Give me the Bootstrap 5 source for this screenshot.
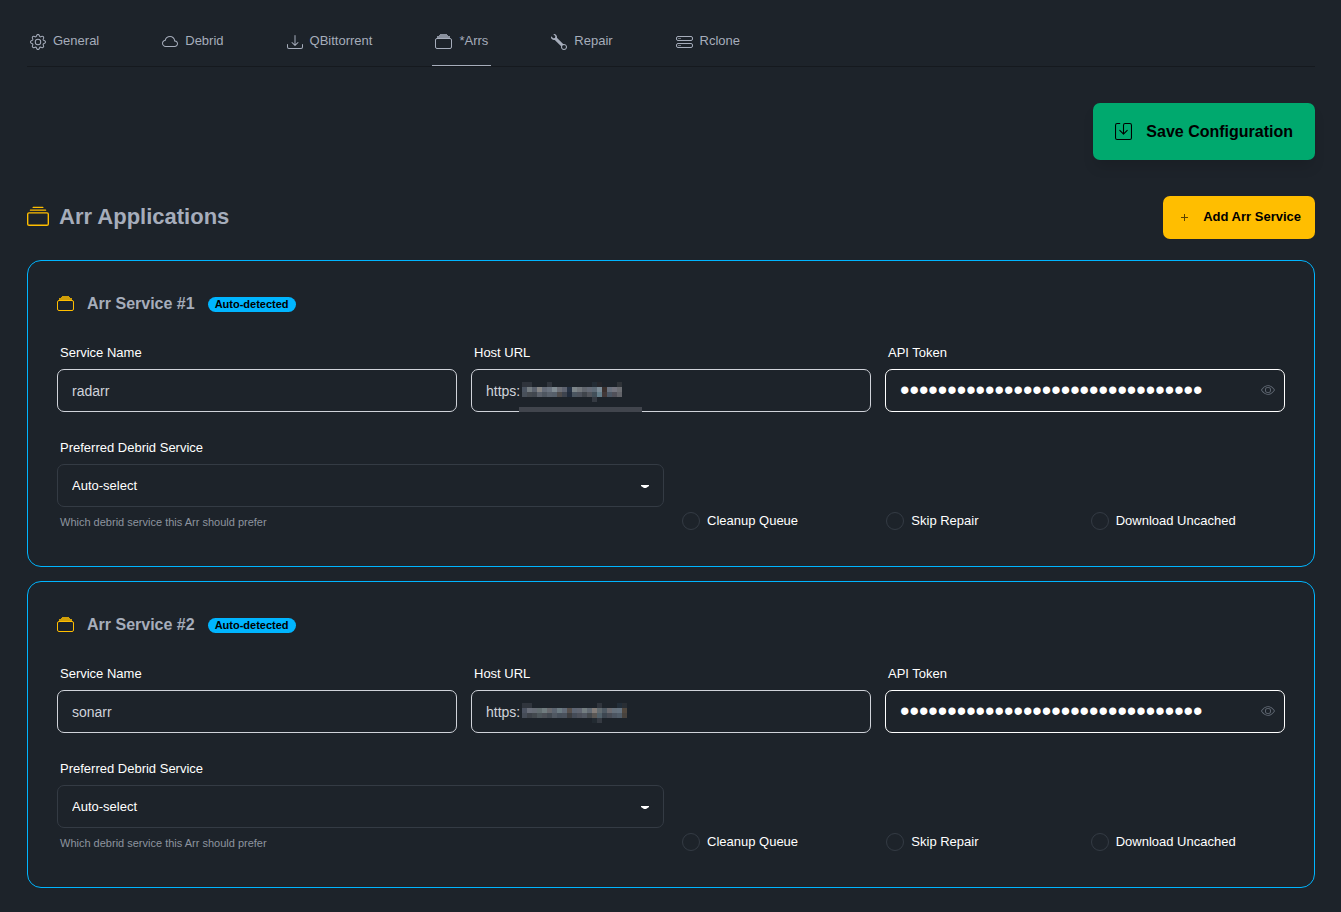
<!DOCTYPE html>
<html lang="en" data-bs-theme="dark">
<head>
<meta charset="utf-8">
<meta name="viewport" content="width=device-width, initial-scale=1">
<title>Arr Applications</title>
<link href="https://cdn.jsdelivr.net/npm/bootstrap@5.3.0/dist/css/bootstrap.min.css" rel="stylesheet">
<style>
body{background:#1d232a;color:#a6adbb;font-family:"Liberation Sans",Arial,sans-serif;font-size:13px;line-height:18px}
.page{padding:22px 26px 24px 27px}
svg{flex:none;display:block}
.tabs{gap:57px;border-bottom:1px solid #15191e;margin-bottom:36px}
.tabs .nav-link{padding:0 3px 6px;height:44px;gap:7px;color:#a6adbb;border-bottom:1px solid transparent;border-radius:0}
.tabs .nav-link svg{margin-top:2px}
.tabs .nav-link.active{border-bottom-color:#a6adbb}
.btn-save,.btn-save:hover{background:#00a96e;color:#000}
.btn-save{font-size:16px;font-weight:700;height:57px;padding:0 22px;gap:14px;border:0;border-radius:7px;box-shadow:0 9px 14px -3px #0002}
.btn-add,.btn-add:hover{background:#ffbe00;color:#000}
.btn-add{font-weight:700;font-size:13px;line-height:18px;height:43px;padding:0 14px 2px;gap:12px;border:0;border-radius:7px}
.title-row{margin:36px 0 21px}
h1{font-size:22px;line-height:30px;font-weight:700;margin:0;padding-bottom:2px;gap:10px}
h2{font-size:16px;line-height:26px;font-weight:700;margin:0}
h1,h2{color:#a6adbb}
.gold{color:#ffbe00}
.service{border:1px solid #00b5ff;border-radius:14px;padding:29px;margin-bottom:14px}
.service-head{gap:13px;margin-bottom:27px;padding-top:1px}
.detected{background:#00b5ff;color:#000;font-size:11px;font-weight:700;line-height:15px;padding:0 7px;border-radius:8px}
.fields{display:grid;grid-template-columns:repeat(3,1fr);gap:14px}
.options{display:grid;grid-template-columns:1fr 1fr;gap:14px;margin-top:27px}
.form-label{color:#fff;margin:0 0 7px;padding-left:3px;display:block}
.service .form-control,.service .form-select{background:transparent;border:1px solid #d0d3da;border-radius:7px;height:43px;padding:0 14px;font-size:14px;color:#d0d3da}
.service .token{border-color:#fff;color:#fff;padding-right:40px;font-size:27px}
.service .form-select{border-color:#343b44;color:#fff;font-size:13px;appearance:none}
.caret{right:15px;top:21px;pointer-events:none}
.eye{right:10px;top:14px;padding:0;border:0;background:none;color:#626a75}
.mosaic{left:48px;top:13px;pointer-events:none}
.hint{font-size:11px;line-height:15px;margin:8px 0 7px;padding-left:3px;color:#8d949f}
.checks{display:grid;grid-template-columns:repeat(3,1fr);gap:10px;align-items:end;padding:0 0 7px 4px}
.tick{gap:7px;color:#fff}
.tick .form-check-input{margin:0;width:18px;height:18px;border:1px solid #343b44;background-color:transparent;border-radius:50%}
</style>
</head>
<body>
<svg class="d-none" xmlns="http://www.w3.org/2000/svg">
<symbol id="gear" viewBox="0 0 16 16"><path d="M8 4.754a3.246 3.246 0 1 0 0 6.492 3.246 3.246 0 0 0 0-6.492zM5.754 8a2.246 2.246 0 1 1 4.492 0 2.246 2.246 0 0 1-4.492 0z"/><path d="M9.796 1.343c-.527-1.79-3.065-1.79-3.592 0l-.094.319a.873.873 0 0 1-1.255.52l-.292-.16c-1.64-.892-3.433.902-2.54 2.541l.159.292a.873.873 0 0 1-.52 1.255l-.319.094c-1.79.527-1.79 3.065 0 3.592l.319.094a.873.873 0 0 1 .52 1.255l-.16.292c-.892 1.64.901 3.434 2.541 2.54l.292-.159a.873.873 0 0 1 1.255.52l.094.319c.527 1.79 3.065 1.79 3.592 0l.094-.319a.873.873 0 0 1 1.255-.52l.292.16c1.64.893 3.434-.902 2.54-2.541l-.159-.292a.873.873 0 0 1 .52-1.255l.319-.094c1.79-.527 1.79-3.065 0-3.592l-.319-.094a.873.873 0 0 1-.52-1.255l.16-.292c.893-1.64-.902-3.433-2.541-2.54l-.292.159a.873.873 0 0 1-1.255-.52l-.094-.319zm-2.633.283c.246-.835 1.428-.835 1.674 0l.094.319a1.873 1.873 0 0 0 2.693 1.115l.291-.16c.764-.415 1.6.42 1.184 1.185l-.159.292a1.873 1.873 0 0 0 1.116 2.692l.318.094c.835.246.835 1.428 0 1.674l-.319.094a1.873 1.873 0 0 0-1.115 2.693l.16.291c.415.764-.42 1.6-1.185 1.184l-.291-.159a1.873 1.873 0 0 0-2.693 1.116l-.094.318c-.246.835-1.428.835-1.674 0l-.094-.319a1.873 1.873 0 0 0-2.692-1.115l-.292.16c-.764.415-1.6-.42-1.184-1.185l.159-.291A1.873 1.873 0 0 0 1.945 8.93l-.319-.094c-.835-.246-.835-1.428 0-1.674l.319-.094A1.873 1.873 0 0 0 3.06 4.377l-.16-.292c-.415-.764.42-1.6 1.185-1.184l.292.159a1.873 1.873 0 0 0 2.692-1.115l.094-.319z"/></symbol>
<symbol id="cloud" viewBox="0 0 16 16"><path d="M4.406 3.342A5.53 5.53 0 0 1 8 2c2.69 0 4.923 2 5.166 4.579C14.758 6.804 16 8.137 16 9.773 16 11.569 14.502 13 12.687 13H3.781C1.708 13 0 11.366 0 9.318c0-1.763 1.266-3.223 2.942-3.593.143-.863.698-1.723 1.464-2.383zm.653.757c-.757.653-1.153 1.44-1.153 2.056v.448l-.445.049C2.064 6.805 1 7.952 1 9.318 1 10.785 2.23 12 3.781 12h8.906C13.98 12 15 10.988 15 9.773c0-1.216-1.02-2.228-2.313-2.228h-.5v-.5C12.188 4.825 10.328 3 8 3a4.53 4.53 0 0 0-2.941 1.1z"/></symbol>
<symbol id="download" viewBox="0 0 16 16"><path d="M.5 9.900a.5.5 0 0 1 .5.5v2.500a1 1 0 0 0 1 1h12a1 1 0 0 0 1-1v-2.500a.5.5 0 0 1 1 0v2.500a2 2 0 0 1-2 2H2a2 2 0 0 1-2-2v-2.500a.5.5 0 0 1 .5-.5z"/><path d="M7.646 11.854a.5.5 0 0 0 .708 0l3-3a.5.5 0 0 0-.708-.708L8.500 10.293V1.500a.5.5 0 0 0-1 0v8.793L5.354 8.146a.5.5 0 1 0-.708.708l3 3z"/></symbol>
<symbol id="stack" viewBox="0 0 16 16"><path d="M2.500 3.500a.5.5 0 0 1 0-1h11a.5.5 0 0 1 0 1h-11zm2-2a.5.5 0 0 1 0-1h7a.5.5 0 0 1 0 1h-7zM0 13a1.500 1.500 0 0 0 1.500 1.500h13A1.500 1.500 0 0 0 16 13V6a1.500 1.500 0 0 0-1.500-1.500h-13A1.500 1.500 0 0 0 0 6v7zm1.500.5A.5.5 0 0 1 1 13V6a.5.5 0 0 1 .5-.5h13a.5.5 0 0 1 .5.5v7a.5.5 0 0 1-.5.5h-13z"/></symbol>
<symbol id="stack-small" viewBox="0 0 17 16"><path fill="none" stroke="currentColor" d="M2 4.500h13a1.500 1.500 0 0 1 1.500 1.500v7a1.500 1.500 0 0 1-1.500 1.500H2A1.500 1.500 0 0 1 .5 13V6A1.500 1.500 0 0 1 2 4.500z"/><path opacity=".8" d="M5 0h7v1h1v1h2v2H2V2h2V1h1z"/></symbol>
<symbol id="wrench" viewBox="0 0 16 16"><path fill-rule="evenodd" d="M.102 2.223A3.004 3.004 0 0 0 3.780 5.897l6.341 6.252A3.003 3.003 0 0 0 13 16a3 3 0 1 0-.851-5.878L5.897 3.781A3.004 3.004 0 0 0 2.223.1l2.141 2.142L4 4l-1.757.364L.102 2.223zM13 11a2 2 0 1 1 0 4 2 2 0 0 1 0-4z"/></symbol>
<symbol id="rack" viewBox="0 0 17 16"><path fill="none" stroke="currentColor" d="M2 2.500h13a1.500 1.500 0 0 1 1.500 1.500v1A1.500 1.500 0 0 1 15 6.500H2A1.500 1.500 0 0 1 .5 5V4A1.500 1.500 0 0 1 2 2.500zM2 9.500h13a1.500 1.500 0 0 1 1.500 1.500v1a1.500 1.500 0 0 1-1.500 1.500H2A1.500 1.500 0 0 1 .5 12v-1A1.500 1.500 0 0 1 2 9.500z"/><path opacity=".6" d="M2 4h3v1H2zM2 11h3v1H2z"/></symbol>
<symbol id="save" viewBox="0 0 16 16"><path d="M2 1a1 1 0 0 0-1 1v12a1 1 0 0 0 1 1h12a1 1 0 0 0 1-1V2a1 1 0 0 0-1-1H9.500a1 1 0 0 0-1 1v7.293l2.646-2.647a.5.5 0 0 1 .708.708l-3.500 3.500a.5.5 0 0 1-.708 0l-3.500-3.500a.5.5 0 1 1 .708-.708L7.500 9.293V2a2 2 0 0 1 2-2H14a2 2 0 0 1 2 2v12a2 2 0 0 1-2 2H2a2 2 0 0 1-2-2V2a2 2 0 0 1 2-2h2.500a.5.5 0 0 1 0 1H2z"/></symbol>
<symbol id="eye" viewBox="0 0 16 16"><path d="M16 8s-3-5.500-8-5.500S0 8 0 8s3 5.500 8 5.500S16 8 16 8zM1.173 8a13.133 13.133 0 0 1 1.660-2.043C4.120 4.668 5.880 3.500 8 3.500c2.120 0 3.879 1.168 5.168 2.457A13.133 13.133 0 0 1 14.828 8c-.58.870-3.200 4.500-6.828 4.500S1.753 8.870 1.173 8z"/><path d="M8 5.500a2.500 2.500 0 1 0 0 5 2.500 2.500 0 0 0 0-5zM4.500 8a3.500 3.500 0 1 1 7 0 3.500 3.500 0 0 1-7 0z"/></symbol>
</svg>

<div class="page">
<nav class="nav tabs flex-nowrap" aria-label="Settings">
<a class="nav-link d-flex align-items-center" href="#general"><svg width="16" height="16" fill="currentColor"><use href="#gear"/></svg>General</a>
<a class="nav-link d-flex align-items-center" href="#debrid"><svg width="16" height="16" fill="currentColor"><use href="#cloud"/></svg>Debrid</a>
<a class="nav-link d-flex align-items-center" href="#qbittorrent"><svg width="16" height="16" fill="currentColor"><use href="#download"/></svg>QBittorrent</a>
<a class="nav-link d-flex align-items-center active" aria-current="page" href="#arrs"><svg width="17" height="16" fill="currentColor"><use href="#stack-small"/></svg>*Arrs</a>
<a class="nav-link d-flex align-items-center" href="#repair"><svg width="16" height="16" fill="currentColor"><use href="#wrench"/></svg>Repair</a>
<a class="nav-link d-flex align-items-center" href="#rclone"><svg width="17" height="16" fill="currentColor"><use href="#rack"/></svg>Rclone</a>
</nav>

<form>
<div class="d-flex justify-content-end">
<button type="submit" class="btn btn-save d-flex align-items-center"><svg width="17" height="17" fill="currentColor"><use href="#save"/></svg>Save Configuration</button>
</div>

<div class="d-flex justify-content-between align-items-center title-row">
<h1 class="d-flex align-items-center"><svg class="gold" width="22" height="22" fill="currentColor"><use href="#stack"/></svg>Arr Applications</h1>
<button type="button" class="btn btn-add d-flex align-items-center"><svg width="14" height="14" viewBox="0 0 14 14" stroke="#5c4200"><path d="M4 7.500h7M7.500 4v7"/></svg>Add Arr Service</button>
</div>

<div id="services"></div>
</form>
</div>

<template id="service-card">
<section class="service">
<div class="d-flex align-items-center service-head"><svg class="gold" width="17" height="16" fill="currentColor"><use href="#stack-small"/></svg><h2></h2><span class="detected">Auto-detected</span></div>
<div class="fields">
<div><label class="form-label" data-for="name">Service Name</label><input type="text" class="form-control" data-id="name"></div>
<div><label class="form-label" data-for="host">Host URL</label><div class="position-relative"><input type="text" class="form-control" data-id="host" value="https:"><svg class="mosaic position-absolute" width="125" height="30" shape-rendering="crispEdges" aria-hidden="true"></svg></div></div>
<div><label class="form-label" data-for="token">API Token</label><div class="position-relative"><input type="password" class="form-control token" data-id="token" value="00000000000000000000000000000000"><button type="button" class="eye position-absolute" aria-label="Show token"><svg width="14" height="14" fill="currentColor"><use href="#eye"/></svg></button></div></div>
</div>
<div class="options">
<div><label class="form-label" data-for="debrid">Preferred Debrid Service</label><div class="position-relative"><select class="form-select" data-id="debrid"><option>Auto-select</option></select><svg class="caret position-absolute" width="8" height="4" fill="#fff"><path d="M0 0h8v1L5 3H3L0 1z"/></svg></div><div class="hint">Which debrid service this Arr should prefer</div></div>
<div class="checks">
<div class="d-flex align-items-center tick"><input type="checkbox" class="form-check-input" data-id="cleanup"><label data-for="cleanup">Cleanup Queue</label></div>
<div class="d-flex align-items-center tick"><input type="checkbox" class="form-check-input" data-id="skip"><label data-for="skip">Skip Repair</label></div>
<div class="d-flex align-items-center tick"><input type="checkbox" class="form-check-input" data-id="uncached"><label data-for="uncached">Download Uncached</label></div>
</div>
</div>
</section>
</template>

<script>
// Rows of 5px cells that hide the private part of each host name; "-" is an empty cell.
const services = [
  {name: 'radarr', bar: true, cells: [
    '2f343c 2f343c - - - 30353d - - - - - - - - 232c35 25262b - - - 2f3338',
    '4a5360 737b80 5a616d 858585 646b78 6b7480 818c93 6d7078 5e6370 263244 7c8589 73787d 61666e 656b77 5e6b77 7b8b96 3a302e 69717e 73747e 6b6d72',
    '48505a 454a50 41474f 5b616b 4e5660 59616c 565f6a 4f4c4c 3d434e 212b3b 4a5560 4d525c 3f444b 52555c 424f59 647d89 423838 4b5664 505059 626369',
    '- - - - - - - - - - - - - - 353a42 - - - - -']},
  {name: 'sonarr', bar: false, cells: [
    '30353d 30353d - - - - - - - - - - - - - 30353d - - - 222d38 292e34',
    '4b5260 686d78 656b74 626d70 707c7f 68696e 5b6470 6c7b82 626b78 57504d 5c6472 606571 737d80 626a73 837d79 626b70 4e5963 6c6b70 65707b 65727f 51483f',
    '454c57 3d4249 43494e 4d565b 4c5057 424951 505862 47505b 4a515c 3c3d40 444b57 4c505a 515761 44494d 5b5855 52616a 3d4650 484c55 4c5561 505c68 48433e',
    '- - - - - - - - - - - - - - 222a31 353a42 - - - - -']}
];
const list = document.getElementById('services');
services.forEach((service, index) => {
  const card = document.getElementById('service-card').content.cloneNode(true);
  const key = id => id + '-' + (index + 1);
  card.querySelectorAll('[data-id]').forEach(el => el.id = key(el.dataset.id));
  card.querySelectorAll('[data-for]').forEach(el => el.htmlFor = key(el.dataset.for));
  card.querySelector('h2').textContent = 'Arr Service #' + (index + 1);
  card.querySelector('[data-id=name]').value = service.name;
  let shapes = '';
  service.cells.forEach((row, y) => row.split(' ').forEach((color, x) => {
    if (color !== '-') shapes += `<rect x="${3 + x * 5}" y="${y * 5}" width="5" height="5" fill="#${color}"/>`;
  }));
  if (service.bar) shapes += '<rect y="25" width="123" height="5" fill="#41454d"/>';
  card.querySelector('.mosaic').innerHTML = shapes;
  list.append(card);
});
</script>
<script src="https://cdn.jsdelivr.net/npm/bootstrap@5.3.0/dist/js/bootstrap.bundle.min.js"></script>
</body>
</html>
